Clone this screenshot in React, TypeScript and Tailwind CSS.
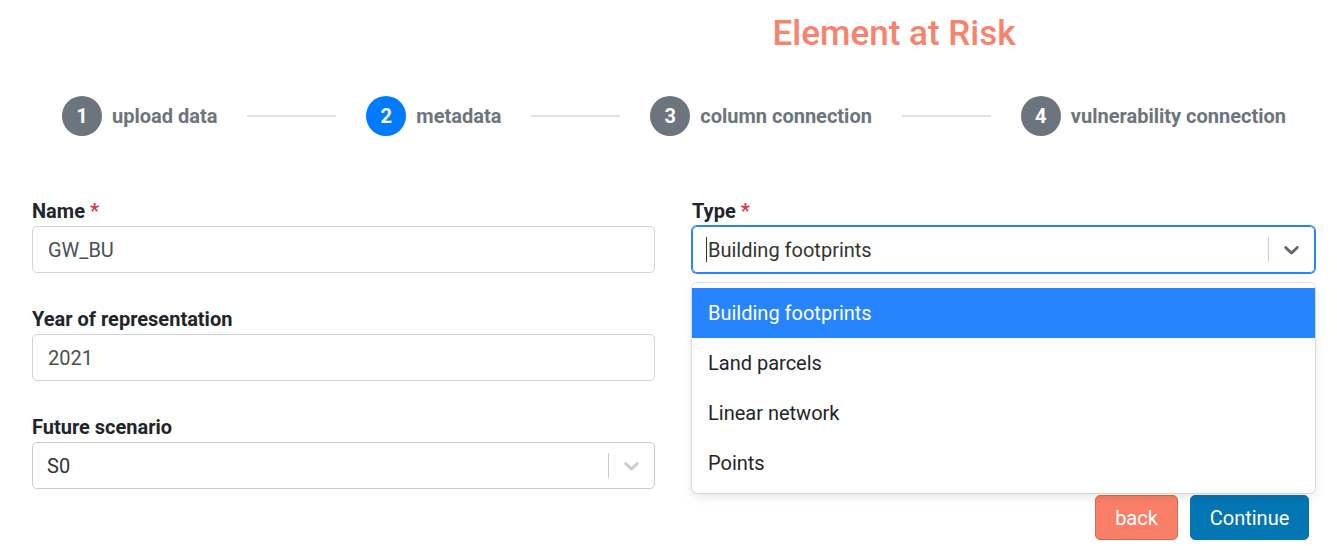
import { ReactNode } from 'react';

const steps = [
  { n: 1, label: 'upload data', active: false },
  { n: 2, label: 'metadata', active: true },
  { n: 3, label: 'column connection', active: false },
  { n: 4, label: 'vulnerability connection', active: false },
];

const typeOptions = ['Building footprints', 'Land parcels', 'Linear network', 'Points'];

function Chevron({ className }: { className?: string }) {
  return (
    <svg viewBox="0 0 20 20" className={className} fill="currentColor" aria-hidden="true">
      <path d="M4.516 7.548c0.436-0.446 1.043-0.481 1.576 0l3.908 3.747 3.908-3.747c0.533-0.481 1.141-0.446 1.574 0 0.436 0.445 0.408 1.197 0 1.615-0.406 0.418-4.695 4.502-4.695 4.502-0.217 0.223-0.502 0.335-0.787 0.335s-0.57-0.112-0.789-0.335c0 0-4.287-4.084-4.695-4.502s-0.436-1.17 0-1.615z" />
    </svg>
  );
}

function Label({ children, required }: { children: ReactNode; required?: boolean }) {
  return (
    <label className="block text-[20px] leading-[30px] font-bold text-[#212529]">
      {children}
      {required && <span className="text-[#dc3545] ml-[5px]">*</span>}
    </label>
  );
}

export default function App() {
  return (
    <div className="min-h-[550px] bg-white font-['Roboto',sans-serif] text-[20px] text-[#212529]">
      <div className="pt-[13px] pl-[451px] text-center">
        <h3 className="text-[35px] leading-[42px] font-medium text-[#f7836d]">Element at Risk</h3>
      </div>

      {/* stepper */}
      <div className="mt-[41px] ml-[62px] w-[1224px] flex items-center">
        {steps.map((s, i) => [
          <div key={s.n} className="flex items-center shrink-0">
            <span
              className={
                s.active
                  ? 'w-10 h-10 rounded-full bg-[#007bff] text-white font-bold text-[20px] flex items-center justify-center'
                  : 'w-10 h-10 rounded-full bg-[#6c757d] text-white font-bold text-[20px] flex items-center justify-center'
              }
            >
              {s.n}
            </span>
            <span className="ml-[10px] text-[20px] font-bold text-[#6c757d] whitespace-nowrap">{s.label}</span>
          </div>,
          i < steps.length - 1 && <div key={'l' + s.n} className="flex-1 h-[2px] bg-[#dee2e6] mx-[30px]" />,
        ])}
      </div>

      {/* form */}
      <div className="mt-[60px] ml-[32px] w-[1283px] grid grid-cols-2 gap-x-[37px]">
        <div>
          <div className="mb-[31px]">
            <Label required>Name</Label>
            <div className="h-[47px] border border-[#ced4da] rounded-[5px] px-[15px] flex items-center text-[#495057]">
              GW_BU
            </div>
          </div>
          <div className="mb-[31px]">
            <Label>Year of representation</Label>
            <div className="h-[47px] border border-[#ced4da] rounded-[5px] px-[15px] flex items-center text-[#495057]">
              2021
            </div>
          </div>
          <div>
            <Label>Future scenario</Label>
            <div className="h-[47px] border border-[#cccccc] rounded-[5px] flex items-center">
              <div className="flex-1 pl-[14px] text-[#333333]">S0</div>
              <span className="w-px h-[25px] bg-[#cccccc]" />
              <div className="px-[10px] text-[#cccccc]">
                <Chevron className="w-[25px] h-[25px]" />
              </div>
            </div>
          </div>
        </div>

        <div>
          <Label required>Type</Label>
          <div className="relative">
            <div className="h-[47px] border border-[#2684ff] shadow-[0_0_0_1px_#2684ff] rounded-[5px] flex items-center">
              <div className="flex-1 pl-[13px] flex items-center text-[#333333]">
                <span className="w-px h-[25px] bg-[#333333] mr-px" />
                Building footprints
              </div>
              <span className="w-px h-[25px] bg-[#cccccc]" />
              <div className="px-[10px] text-[#666666]">
                <Chevron className="w-[25px] h-[25px]" />
              </div>
            </div>

            <div className="absolute left-0 right-0 top-[calc(100%+10px)] z-10 bg-white rounded-[5px] py-[5px] shadow-[0_0_0_1px_rgba(0,0,0,0.1),0_4px_11px_rgba(0,0,0,0.1)]">
              {typeOptions.map((o, i) => (
                <div
                  key={o}
                  className={
                    i === 0
                      ? 'px-[16px] py-[10px] leading-[30px] bg-[#2684ff] text-white'
                      : 'px-[16px] py-[10px] leading-[30px] text-[#212529]'
                  }
                >
                  {o}
                </div>
              ))}
            </div>
          </div>
        </div>
      </div>

      <div className="mt-[6px] ml-[32px] w-[1283px] flex justify-end gap-[12px] pr-[6px]">
        <button className="w-[83px] h-[45px] rounded-[5px] bg-[#fa7f68] border border-[#de6a45] text-white text-[20px]">
          back
        </button>
        <button className="w-[119px] h-[45px] rounded-[5px] bg-[#0476b3] border border-[#0476b3] text-white text-[20px]">
          Continue
        </button>
      </div>
    </div>
  );
}
